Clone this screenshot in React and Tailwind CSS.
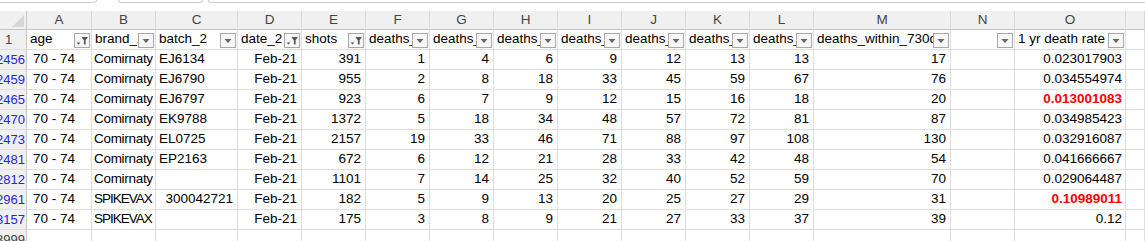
import React from "react";

const GRID =
  "grid grid-cols-[27px_65px_64px_82px_64px_64px_64px_64px_64px_64px_64px_64px_64px_137px_64px_111px_1fr]";

const letters = ["A", "B", "C", "D", "E", "F", "G", "H", "I", "J", "K", "L", "M", "N", "O", ""];

const headers = [
  { t: "age", f: true },
  { t: "brand_2" },
  { t: "batch_2" },
  { t: "date_2", f: true },
  { t: "shots", f: true },
  { t: "deaths_" },
  { t: "deaths_" },
  { t: "deaths_" },
  { t: "deaths_" },
  { t: "deaths_" },
  { t: "deaths_" },
  { t: "deaths_" },
  { t: "deaths_within_730d" },
  { t: "" },
  { t: "1 yr death rate" },
  null,
];

const rows = [
  ["2456", "Comirnaty", "EJ6134", "391", [1, 4, 6, 9, 12, 13, 13, 17], "0.023017903", false],
  ["2459", "Comirnaty", "EJ6790", "955", [2, 8, 18, 33, 45, 59, 67, 76], "0.034554974", false],
  ["2465", "Comirnaty", "EJ6797", "923", [6, 7, 9, 12, 15, 16, 18, 20], "0.013001083", true],
  ["2470", "Comirnaty", "EK9788", "1372", [5, 18, 34, 48, 57, 72, 81, 87], "0.034985423", false],
  ["2473", "Comirnaty", "EL0725", "2157", [19, 33, 46, 71, 88, 97, 108, 130], "0.032916087", false],
  ["2481", "Comirnaty", "EP2163", "672", [6, 12, 21, 28, 33, 42, 48, 54], "0.041666667", false],
  ["2812", "Comirnaty", "", "1101", [7, 14, 25, 32, 40, 52, 59, 70], "0.029064487", false],
  ["2961", "SPIKEVAX", "300042721", "182", [5, 9, 13, 20, 25, 27, 29, 31], "0.10989011", true],
  ["3157", "SPIKEVAX", "", "175", [3, 8, 9, 21, 27, 33, 37, 39], "0.12", false],
];

const cell = "border-r border-b border-[#dedede] h-[20px] overflow-hidden whitespace-nowrap flex items-center";

function FilterButton({ filtered }) {
  return (
    <div className="absolute right-[1px] top-[3px] w-[16px] h-[15px] border border-[#a8a8a8] bg-[#f7f7f7] flex items-center justify-center">
      {filtered ? (
        <svg width="14" height="13" viewBox="0 0 14 13">
          <polygon points="1.5,8.5 5.5,8.5 3.5,10.5" fill="#555" />
          <polygon points="6.5,3 13,3 10.6,6.3 10.6,10.5 8.9,10.5 8.9,6.3" fill="#555" />
        </svg>
      ) : (
        <svg width="14" height="13" viewBox="0 0 14 13">
          <polygon points="3.5,5 10.5,5 7,9" fill="#666" />
        </svg>
      )}
    </div>
  );
}

export default function App() {
  return (
    <div
      className="w-[1145px] h-[241px] overflow-hidden bg-white text-[13.5px] text-black"
      style={{ fontFamily: '"Liberation Sans", Arial, sans-serif' }}
    >
      {/* formula bar remnants */}
      <div className="h-[11px] flex items-start">
        <div className="w-[97px] h-[3px] border-b border-r border-[#cfcfcf] rounded-br-[4px]" />
        <div className="w-[21px]" />
        <div className="w-[85px] h-[3px] border-b border-x border-[#cfcfcf] rounded-b-[4px]" />
        <div className="w-[5px]" />
        <div className="flex-1 h-[3px] border-b border-l border-[#cfcfcf] rounded-bl-[4px]" />
      </div>

      {/* column letters */}
      <div className={`${GRID} h-[19px] bg-[#f0f0f0] text-[#444]`}>
        <div className="h-[19px] border-r border-b border-[#c6c6c6] relative">
          <svg className="absolute right-[2px] bottom-[2px]" width="12" height="12" viewBox="0 0 12 12">
            <polygon points="12,0 12,12 0,12" fill="#d6d6d6" />
          </svg>
        </div>
        {letters.map((l, i) => (
          <div
            key={i}
            className="h-[19px] border-r border-b border-r-[#d8d8d8] border-b-[#c6c6c6] flex items-center justify-center"
          >
            {l}
          </div>
        ))}
      </div>

      {/* header row 1 */}
      <div className={GRID}>
        <div className={`${cell} bg-[#f0f0f0] border-r-[#c6c6c6] text-[#444] pl-[5px] text-[13px]`}>1</div>
        {headers.map((h, i) => (
          <div key={i} className={`${cell} relative pl-[3px]`}>
            {h && <span>{h.t}</span>}
            {h && <FilterButton filtered={h.f} />}
          </div>
        ))}
      </div>

      {/* data rows */}
      {rows.map(([rn, brand, batch, shots, deaths, rate, red]) => (
        <div key={rn} className={GRID}>
          <div className={`${cell} bg-[#f0f0f0] border-r-[#c6c6c6] justify-end pr-[1px] text-[13px] text-[#2424e6]`}>{rn}</div>
          <div className={`${cell} pl-[6px]`}>70 - 74</div>
          <div className={`${cell} pl-[2px] ${brand === "SPIKEVAX" ? "tracking-[-1px]" : "tracking-[-0.3px]"}`}>{brand}</div>
          <div className={`${cell} ${batch && /^\d+$/.test(batch) ? "justify-end pr-[4px]" : "pl-[3px]"}`}>{batch}</div>
          <div className={`${cell} justify-end pr-[4px]`}>Feb-21</div>
          <div className={`${cell} justify-end pr-[4px]`}>{shots}</div>
          {deaths.map((d, i) => (
            <div key={i} className={`${cell} justify-end pr-[4px]`}>{d}</div>
          ))}
          <div className={cell} />
          <div className={`${cell} justify-end pr-[3px] ${red ? "text-[#ff0000] font-bold" : ""}`}>{rate}</div>
          <div className={cell} />
        </div>
      ))}

      {/* partial last row */}
      <div className={GRID}>
        <div className={`${cell} bg-[#f0f0f0] border-r-[#c6c6c6] justify-end pr-[1px] text-[13px] text-[#444]`}>3999</div>
        {letters.map((_, i) => (
          <div key={i} className={cell} />
        ))}
      </div>
    </div>
  );
}
